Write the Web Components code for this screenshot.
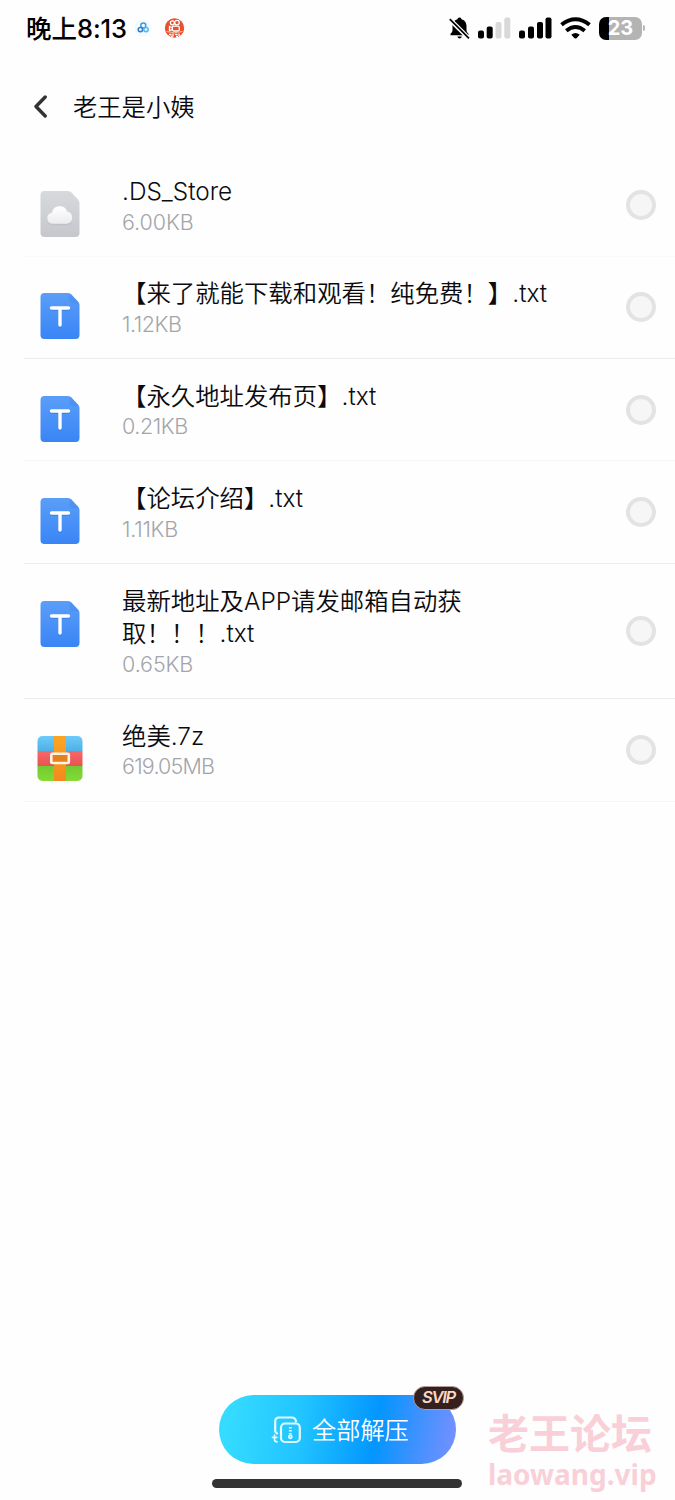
<!DOCTYPE html>
<html lang="zh-CN">
<head>
<meta charset="utf-8">
<title>老王是小姨</title>
<style>
  html, body {
    margin: 0;
    height: 1500px;
    overflow: hidden;
    background: #fefefe;
    font-family: Inter, "Noto Sans CJK SC", sans-serif;
    color: #0b0b0f;
    text-spacing-trim: space-all;
  }
</style>
</head>
<body>
<phone-screen>
  <status-bar slot="top" time="8:13" battery="23">晚上</status-bar>
  <nav-header slot="top">老王是小姨</nav-header>
  <file-row kind="cloud" size="6.00KB" style="--name-track: 0; --size-track: -0.1px; --line: #fafafa">.DS_Store</file-row>
  <file-row kind="text" size="1.12KB" style="--size-track: -0.45px">【来了就能下载和观看！纯免费！】.txt</file-row>
  <file-row kind="text" size="0.21KB" style="--size-track: -0.4px; --line: #f5f5f5">【永久地址发布页】.txt</file-row>
  <file-row kind="text" size="1.11KB" style="--size-track: -0.25px">【论坛介绍】.txt</file-row>
  <file-row kind="text" size="0.65KB" style="--row: 135.3px; --size-track: -0.1px">最新地址及APP请发邮箱自动获取！！！.txt</file-row>
  <file-row kind="zip" size="619.05MB" style="--size-track: -0.8px; --line: #f5f5f5">绝美.7z</file-row>
  <extract-button slot="bottom" badge="SVIP">全部解压</extract-button>
  <site-mark slot="mark" host="laowang.vip">老王论坛</site-mark>
</phone-screen>

<script>
const icons = {
  cloud: `
    <svg width="46" height="46" viewBox="0 0 46 46">
      <defs>
        <linearGradient id="g" x1="0" y1="0" x2="0" y2="1"><stop offset="0" stop-color="#d7d9dd"/><stop offset="1" stop-color="#c5c7cc"/></linearGradient>
        <linearGradient id="c" x1="0" y1="0" x2="0" y2="1"><stop offset="0" stop-color="#fff"/><stop offset="1" stop-color="#ececee"/></linearGradient>
      </defs>
      <path fill="url(#g)" d="M7.500 0H31Q33 0 34.500 1.500L41 8.500Q42.500 10 42.500 12V42a4 4 0 0 1-4 4H7.500a4 4 0 0 1-4-4V4a4 4 0 0 1 4-4z"/>
      <path fill="#b3b5ba" opacity=".45" d="M15.500 34.200a5.600 5.600 0 0 1-.6-11.100 8 8 0 0 1 15.300-1.300 6.300 6.300 0 0 1-.4 12.400z"/>
      <path fill="url(#c)" d="M15.500 32.800a5.600 5.600 0 0 1-.6-11.100 8 8 0 0 1 15.300-1.300 6.300 6.300 0 0 1-.4 12.400z"/>
    </svg>`,
  text: `
    <svg width="46" height="46" viewBox="0 0 46 46">
      <defs>
        <linearGradient id="g" x1="0" y1="0" x2="0" y2="1"><stop offset="0" stop-color="#5b9ef9"/><stop offset="1" stop-color="#3985f6"/></linearGradient>
      </defs>
      <path fill="url(#g)" d="M7.500 0H31Q33 0 34.500 1.500L41 8.500Q42.500 10 42.500 12V42a4 4 0 0 1-4 4H7.500a4 4 0 0 1-4-4V4a4 4 0 0 1 4-4z"/>
      <path fill="#2d72dc" opacity=".2" d="M32.500 0L42.300 10.300H36.500q-4 0-4-4z"/>
      <path fill="none" stroke="#2f74dc" stroke-width="3.200" stroke-linecap="round" opacity=".5" d="M14.500 16.300H31.500M23 16.300V33.300"/>
      <path fill="none" stroke="#fff" stroke-width="3.400" stroke-linecap="round" d="M14.500 15H31.500M23 15V32"/>
    </svg>`,
  zip: `
    <svg width="46" height="46" viewBox="0 0 46 46">
      <defs>
        <clipPath id="r"><rect x=".5" y="0" width="45" height="45" rx="5"/></clipPath>
        <linearGradient id="b" x1="0" y1="0" x2="0" y2="1"><stop offset="0" stop-color="#6ccbfa"/><stop offset="1" stop-color="#4fb0e4"/></linearGradient>
        <linearGradient id="p" x1="0" y1="0" x2="0" y2="1"><stop offset="0" stop-color="#f5696a"/><stop offset="1" stop-color="#e95152"/></linearGradient>
        <linearGradient id="n" x1="0" y1="0" x2="0" y2="1"><stop offset="0" stop-color="#74c832"/><stop offset="1" stop-color="#83dc34"/></linearGradient>
        <linearGradient id="o" x1="0" y1="0" x2="0" y2="1"><stop offset="0" stop-color="#fba524"/><stop offset="1" stop-color="#f38a1d"/></linearGradient>
      </defs>
      <g clip-path="url(#r)">
        <rect width="46" height="15" fill="url(#b)"/>
        <rect y="15" width="46" height="15" fill="url(#p)"/>
        <rect y="30" width="46" height="15" fill="url(#n)"/>
        <rect x="17" width="12" height="45" fill="url(#o)"/>
      </g>
      <rect x="14.300" y="17.800" width="17.500" height="9.200" rx="1" fill="#e5811d" stroke="#fff3e4" stroke-width="2.600"/>
    </svg>`
};

class PhoneScreen extends HTMLElement {
  constructor() {
    super();
    this.attachShadow({ mode: 'open' }).innerHTML = `
      <style>
        :host {
          display: flex;
          flex-direction: column;
          position: relative;
          width: 675px;
          height: 1500px;
        }
        main {
          flex: 1;
          padding-left: 24px;
        }
        footer {
          display: flex;
          flex-direction: column;
          align-items: center;
          gap: 15px;
          padding-bottom: 12.5px;
        }
        .home {
          width: 250px;
          height: 8.500px;
          margin-right: 1px;
          border-radius: 5px;
          background: #333;
        }
        ::slotted([slot=mark]) {
          position: absolute;
          left: 488px;
          top: 1409px;
        }
      </style>
      <slot name="top"></slot>
      <main><slot></slot></main>
      <footer><slot name="bottom"></slot><div class="home"></div></footer>
      <slot name="mark"></slot>
    `;
  }
}

class StatusBar extends HTMLElement {
  constructor() {
    super();
    const level = this.getAttribute('battery');
    this.attachShadow({ mode: 'open' }).innerHTML = `
      <style>
        :host {
          display: flex;
          align-items: center;
          box-sizing: border-box;
          height: 56px;
          padding: 0 30px 0 26px;
          color: #000;
        }
        .time {
          width: 101px;
          padding-bottom: 4px;
          font-size: 25.500px;
          font-weight: 500;
          white-space: nowrap;
        }
        .time span { letter-spacing: -0.100px; }
        .apps { margin-left: 8px; }
        .signals { margin-left: auto; }
        svg { display: block; }
        .battery {
          display: flex;
          align-items: center;
          margin-left: 7px;
        }
        .cell {
          box-sizing: border-box;
          width: 43px;
          height: 23px;
          border-radius: 7px;
          background: linear-gradient(90deg, #000 10px, #b4b4b4 10px);
          color: #fff;
          font-size: 20px;
          font-weight: 700;
          line-height: 23px;
          text-align: center;
        }
        .tip {
          width: 2px;
          height: 6px;
          border-radius: 0 2px 2px 0;
          background: #b4b4b4;
          margin-left: 1px;
        }
      </style>
      <div class="time"><slot></slot><span>${this.getAttribute('time')}</span></div>
      <svg class="apps" width="52" height="24" viewBox="0 0 52 24">
        <circle cx="8" cy="12" r="8.500" fill="#f3f9fd"/>
        <g fill="none" stroke-width="1.500">
          <circle cx="8.300" cy="9.500" r="2.500" stroke="#3f9be0"/>
          <circle cx="5.400" cy="13.600" r="2.200" stroke="#2f7fd0"/>
          <circle cx="11" cy="13.600" r="2.200" stroke="#55b6ee"/>
        </g>
        <circle cx="39.500" cy="12" r="9.700" fill="#e8512b"/>
        <g fill="none" stroke="#fff" stroke-width="1.300">
          <circle cx="37.400" cy="6.800" r="2"/>
          <circle cx="42" cy="6.600" r="2.300"/>
          <rect x="37.300" y="10.200" width="7" height="4.800" rx="1.500"/>
          <path d="M37 11.500L34.500 10.500V14.500L37 13.700"/>
        </g>
        <path d="M31.500 15.500Q39.500 18 47.500 15.500" fill="none" stroke="#ffd9cb" stroke-width=".8"/>
        <path d="M34 18.500h2.500M38 17.500v3M40 18.300h2.500M44 17.500v2.500M36 20.300h1.500M41 20.500h2" stroke="#fff" stroke-width="1.300"/>
      </svg>
      <svg class="signals" width="143" height="24" viewBox="0 0 143 24">
        <path d="M10.500 1.500c1.100 0 1.800.7 2 1.700 3.600 1 5 3.700 5 7v4c0 1.500 1 2.500 2 3.600v1.500H1.500v-1.500c1-1.100 2-2.100 2-3.600v-4c0-3.300 1.400-6 5-7 .2-1 .9-1.700 2-1.700z"/>
        <path d="M8.300 20.500h4.600q-.6 2-2.300 2t-2.300-2z"/>
        <path d="M0 2.500L20 22.500" stroke="#fefefe" stroke-width="4.500"/>
        <path d="M.8 3.200L20 22.400" stroke="#000" stroke-width="1.700"/>
        <g>
          <rect x="29" y="14.500" width="6" height="8" rx="2"/>
          <rect x="37.700" y="10.500" width="6" height="12" rx="2"/>
          <rect x="46.500" y="6" width="6" height="16.500" rx="2" fill="#d9d9d9"/>
          <rect x="55.300" y="1.500" width="6" height="21" rx="2" fill="#d9d9d9"/>
          <rect x="70" y="14.500" width="6" height="8" rx="2"/>
          <rect x="79" y="10.500" width="6" height="12" rx="2"/>
          <rect x="88" y="6" width="6" height="16.500" rx="2"/>
          <rect x="96.500" y="1.500" width="6" height="21" rx="2"/>
        </g>
        <g fill="none" stroke="#000" stroke-width="4">
          <path d="M112.500 8.800Q126.500-2.200 140.500 8.800"/>
          <path d="M117.300 14.800Q126.500 7.200 135.700 14.800"/>
        </g>
        <path d="M122.300 18.700Q126.500 15.500 130.700 18.700L127.500 22.200Q126.500 23 125.500 22.200z"/>
      </svg>
      <div class="battery"><div class="cell">${level}</div><div class="tip"></div></div>
    `;
  }
}

class NavHeader extends HTMLElement {
  constructor() {
    super();
    this.attachShadow({ mode: 'open' }).innerHTML = `
      <style>
        :host {
          display: flex;
          align-items: center;
          gap: 23px;
          box-sizing: border-box;
          height: 98.300px;
          padding: 2px 0 0 32px;
          font-size: 24.300px;
          font-weight: 350;
        }
        svg { display: block; }
        slot { display: block; padding-bottom: 1px; }
      </style>
      <svg width="18" height="24" viewBox="0 0 18 24">
        <path d="M13.200 3L4 12.500L13.200 22" fill="none" stroke="#333" stroke-width="3.400" stroke-linecap="round" stroke-linejoin="round"/>
      </svg>
      <slot></slot>
    `;
  }
}

class FileRow extends HTMLElement {
  constructor() {
    super();
    this.attachShadow({ mode: 'open' }).innerHTML = `
      <style>
        :host {
          display: grid;
          grid-template-columns: 98px 440px 1fr;
          box-sizing: border-box;
          height: var(--row, 102.400px);
          padding-right: 19px;
          border-bottom: 1.500px solid var(--line, #ececec);
        }
        .icon { padding: 36.700px 0 0 13px; }
        .info { padding-top: 20.800px; }
        svg { display: block; }
        .name {
          font-size: 24.400px;
          font-weight: 350;
          line-height: 32.500px;
          letter-spacing: var(--name-track, 0);
        }
        .size {
          height: 28px;
          font-size: 21.500px;
          font-weight: 300;
          line-height: 28px;
          letter-spacing: var(--size-track, 0);
          color: #a3a5aa;
        }
        .check {
          justify-self: end;
          align-self: center;
          box-sizing: border-box;
          width: 30px;
          height: 30px;
          border: 4px solid #e3e3e3;
          border-radius: 50%;
          background: #f6f6f6;
        }
      </style>
      <div class="icon">${icons[this.getAttribute('kind')]}</div>
      <div class="info">
        <div class="name"><slot></slot></div>
        <div class="size">${this.getAttribute('size')}</div>
      </div>
      <div class="check"></div>
    `;
  }
}

class ExtractButton extends HTMLElement {
  constructor() {
    super();
    this.attachShadow({ mode: 'open' }).innerHTML = `
      <style>
        :host {
          display: flex;
          align-items: center;
          position: relative;
          box-sizing: border-box;
          width: 237px;
          height: 69px;
          padding-left: 52px;
          gap: 10px;
          border-radius: 35px;
          background: linear-gradient(98deg, #36dcff 4%, #21c4ff 35%, #0396ff 66%, #2f92ff 78%, #7390ff 98%);
          color: #fff;
          font-size: 24.200px;
          font-weight: 350;
        }
        svg { display: block; }
        slot { display: block; padding-bottom: 2px; }
        .badge {
          position: absolute;
          right: -8px;
          top: -9px;
          box-sizing: border-box;
          width: 51px;
          height: 24px;
          border: 1px solid #b79c98;
          border-radius: 12px;
          background: #34211f;
          color: #fbd9c4;
          font-size: 16.500px;
          font-weight: 600;
          font-style: italic;
          line-height: 21px;
          letter-spacing: -1.200px;
          text-align: center;
        }
      </style>
      <svg width="31" height="28" viewBox="0 0 31 28">
        <g fill="none" stroke="#e4fbff" stroke-width="2.200" stroke-linecap="round" stroke-linejoin="round">
          <path d="M6 17.500L4.200 15.500V5.500Q4.200 1.500 8.200 1.500H20.500Q24.500 1.500 25 5.500"/>
          <rect x="10" y="7.500" width="18.800" height="18.500" rx="4"/>
          <path d="M3.500 19V23.500Q3.500 25.800 6 25.800M1.500 21.300H5.800" stroke-width="1.700"/>
          <path d="M19.300 11v1.600M19.300 14v1.600M19.300 17v1.500" stroke-width="2.800" stroke-linecap="butt"/>
          <circle cx="19.300" cy="20.800" r="1.500" stroke-width="1.700"/>
        </g>
      </svg>
      <slot></slot>
      <div class="badge">${this.getAttribute('badge')}</div>
    `;
  }
}

class SiteMark extends HTMLElement {
  constructor() {
    super();
    this.attachShadow({ mode: 'open' }).innerHTML = `
      <style>
        :host {
          display: block;
          color: #f9d0d8;
          font-weight: 700;
          white-space: nowrap;
        }
        .title {
          font-size: 41px;
          line-height: 50px;
        }
        .host {
          font-family: "Noto Sans", sans-serif;
          font-size: 28px;
          line-height: 31px;
        }
      </style>
      <div class="title"><slot></slot></div>
      <div class="host">${this.getAttribute('host')}</div>
    `;
  }
}

customElements.define('phone-screen', PhoneScreen);
customElements.define('status-bar', StatusBar);
customElements.define('nav-header', NavHeader);
customElements.define('file-row', FileRow);
customElements.define('extract-button', ExtractButton);
customElements.define('site-mark', SiteMark);
</script>
</body>
</html>
